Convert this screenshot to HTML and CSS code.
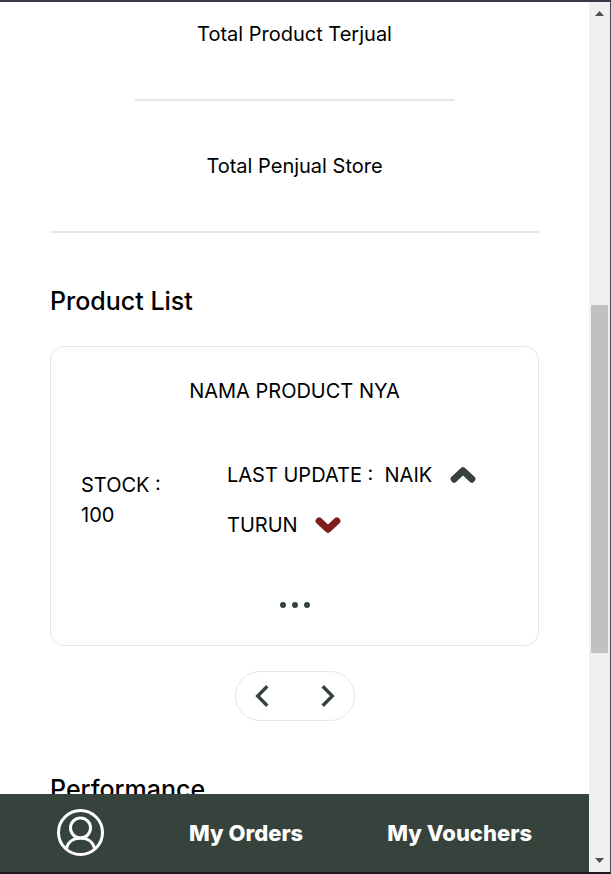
FILE: index.html
```html
<!DOCTYPE html>
<html lang="id">
<head>
  <meta charset="utf-8">
  <meta name="viewport" content="width=device-width, initial-scale=1">
  <title>Store</title>
  <link rel="stylesheet" href="styles.css">
</head>
<body>
  <div class="window">
    <div class="view">
      <main class="content">
        <p class="stat">Total Product Terjual</p>
        <hr class="rule rule-short">
        <p class="stat">Total Penjual Store</p>
        <hr class="rule">

        <h2 class="heading">Product List</h2>
        <article class="card">
          <h3 class="card-title">NAMA PRODUCT NYA</h3>
          <div class="card-body">
            <p class="stock">STOCK : 100</p>
            <div class="updates">
              <p class="update">LAST UPDATE :&nbsp; NAIK
                <svg class="trend up" viewBox="0 0 26 16" aria-hidden="true"><path d="M11.200 .8Q13-.8 14.800 .8L25 10.200Q26.200 12 25 13.500L23.600 15.200Q22 16.400 20.200 15.200L13 8.500 5.800 15.200Q4 16.400 2.400 15.200L1 13.500Q-.2 12 1 10.200Z"/></svg>
              </p>
              <p class="update">TURUN
                <svg class="trend down" viewBox="0 0 26 16" aria-hidden="true"><path d="M11.200 15.200Q13 16.800 14.800 15.200L25 5.800Q26.200 4 25 2.500L23.600 .8Q22-.4 20.200 .8L13 7.500 5.800 .8Q4-.4 2.400 .8L1 2.500Q-.2 4 1 5.800Z"/></svg>
              </p>
            </div>
          </div>
          <button class="more" type="button" aria-label="More">
            <svg viewBox="0 0 30 6" width="30" height="6"><circle cx="3" cy="3" r="3"/><circle cx="15" cy="3" r="3"/><circle cx="27" cy="3" r="3"/></svg>
          </button>
        </article>

        <div class="pager">
          <button type="button" aria-label="Previous"><svg viewBox="0 0 14 22" width="14" height="22"><path d="M12.300 1.300 2.700 11 12.300 20.700"/></svg></button>
          <button type="button" aria-label="Next"><svg viewBox="0 0 14 22" width="14" height="22"><path d="M1.700 1.300 11.300 11 1.700 20.700"/></svg></button>
        </div>

        <h2 class="heading">Performance</h2>
      </main>
      <nav class="nav">
        <a href="#profile" aria-label="Profile">
          <svg class="avatar" viewBox="0 0 48 48"><circle cx="23.500" cy="23.500" r="22"/><circle cx="23.500" cy="19" r="10"/><path d="M9 40.500C10.500 33.500 16 29 23.500 29S36.500 33.500 38 40.500"/></svg>
        </a>
        <a href="#orders">My Orders</a>
        <a href="#vouchers">My Vouchers</a>
      </nav>
    </div>
    <div class="scrollbar" aria-hidden="true">
      <svg viewBox="0 0 9 5" width="9" height="5"><path d="M4.500 0 9 5H0Z"/></svg>
      <div class="track"><div class="thumb"></div></div>
      <svg viewBox="0 0 9 5" width="9" height="5"><path d="M0 0H9L4.500 5Z"/></svg>
    </div>
  </div>
</body>
</html>
```
FILE: styles.css
```css
* { box-sizing: border-box; }
body {
  margin: 0;
  font: 400 20px/30px Inter, "Liberation Sans", sans-serif;
  color: #000;
  background: #fff;
}
h2, h3, p { margin: 0; font-weight: inherit; font-size: inherit; }
button { padding: 0; border: 0; background: none; cursor: pointer; }
svg { display: block; }

.window {
  display: flex;
  height: 100vh;
  border-top: 2px solid #393844;
  border-right: 1px solid #4b4b57;
  border-bottom: 2px solid #1c1a1f;
}
.view { flex: 1; min-width: 0; display: flex; flex-direction: column; }
.content { flex: 1; min-height: 0; overflow: hidden; padding: 17px 50px 0; }

.stat { text-align: center; }
.rule { width: 100%; height: 2px; margin: 50px auto; border: 0; background: #e5e7eb; }
.rule-short { max-width: 320px; }

.heading { font-size: 25px; line-height: 36px; font-weight: 500; }
.card {
  margin-top: 27px;
  padding: 29px 30px 25px;
  border: 1px solid #e5e7eb;
  border-radius: 14px;
}
.card-title { text-align: center; }
.card-body { display: flex; align-items: center; gap: 46px; margin-top: 44px; }
.stock { width: 100px; }
.updates { flex: 1; }
.update { line-height: 50px; }
.trend {
  display: inline-block;
  width: 26px;
  height: 16px;
  margin-left: 12px;
  vertical-align: -1px;
  fill: #35433c;
}
.down { fill: #7f1d1d; }
.more { display: block; width: 30px; height: 30px; margin: 40px auto 0; }
.more svg { fill: #35433c; }

.pager {
  display: flex;
  justify-content: space-between;
  width: 120px;
  height: 50px;
  margin: 25px auto 50px;
  padding: 0 1px;
  border: 1px solid #e5e7eb;
  border-radius: 25px;
}
.pager button { display: grid; place-items: center; width: 50px; }
.pager svg { fill: none; stroke: #35433c; stroke-width: 3.400; }

.nav {
  flex: none;
  display: flex;
  align-items: center;
  justify-content: space-between;
  height: 78px;
  padding: 0 57px;
  background: #35433c;
}
.nav a { color: #fff; font-size: 22px; font-weight: 800; text-decoration: none; }
.avatar { width: 48px; height: 48px; fill: none; stroke: #fff; stroke-width: 3; }

.scrollbar {
  flex: none;
  display: flex;
  flex-direction: column;
  align-items: center;
  width: 21px;
  padding: 9px 0;
  background: #f0f0f0;
}
.scrollbar svg { fill: #505050; }
.track { flex: 1; width: 17px; padding: 289px 0 205px; }
.thumb { height: 100%; background: #c1c1c1; }
```
